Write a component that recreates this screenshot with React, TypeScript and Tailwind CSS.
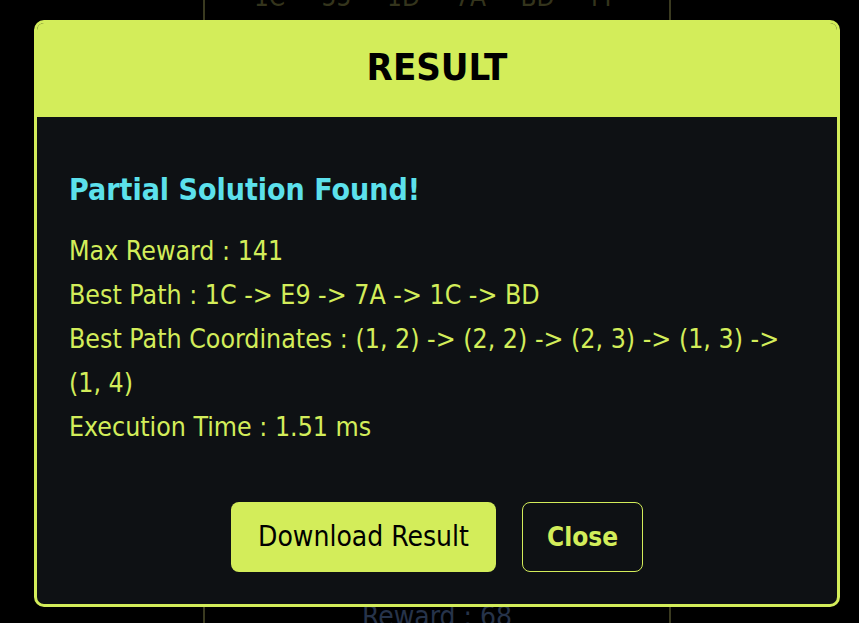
import React from "react";

const FONT = '"Liberation Sans Narrow", "DejaVu Sans Condensed", "Roboto", sans-serif';

export default function App() {
  const codes = ["1C", "55", "1D", "7A", "BD", "FF"];
  const coords = ["(1, 2)", "(2, 2)", "(2, 3)", "(1, 3)", "(1, 4)"];
  return (
    <div
      className="relative h-[623px] w-full overflow-hidden bg-black"
      style={{ fontFamily: FONT }}
    >
      {/* background page */}
      <div className="ml-[203px] flex h-[623px] w-[468px] flex-col justify-between border-x-2 border-[#3a3a20]">
        <div className="-mt-[17px] flex justify-center text-[26px] leading-[28px] text-[#34341c]">
          {codes.map((c) => (
            <span key={c} className="w-[67px] text-center">
              {c}
            </span>
          ))}
        </div>
        <div className="mb-[-14px] text-center text-[28px] leading-[40px] text-[#26334a]">
          Reward : 68
        </div>
      </div>

      {/* modal */}
      <div className="absolute left-[34px] top-[20px] flex h-[587px] w-[806px] flex-col overflow-hidden rounded-[10px] border-[3px] border-[#d3ed5a] bg-[#0e1114]">
        <div className="flex h-[94px] items-center justify-center bg-[#d3ed5a] pb-[6px]">
          <h1 className="text-[38px] font-bold leading-none text-black">RESULT</h1>
        </div>
        <div className="flex flex-1 flex-col px-[32px] pt-[51px]">
          <h2 className="text-[30px] font-bold leading-[44px] text-[#5ce1ec]">
            Partial Solution Found!
          </h2>
          <div className="mt-[17px] text-[26.5px] leading-[44px] text-[#d3ed5a]">
            <p>Max Reward : 141</p>
            <p>Best Path : 1C -&gt; E9 -&gt; 7A -&gt; 1C -&gt; BD</p>
            <p>
              Best Path Coordinates :{" "}
              {coords.map((c, i) => (
                <React.Fragment key={c}>
                  <span className="whitespace-nowrap">{c}</span>
                  {i < coords.length - 1 ? " -> " : ""}
                </React.Fragment>
              ))}
            </p>
            <p>Execution Time : 1.51 ms</p>
          </div>
          <div className="mt-[53px] flex justify-center gap-[26px]">
            <button className="h-[70px] w-[265px] rounded-[8px] bg-[#d3ed5a] text-[28px] text-black">
              Download Result
            </button>
            <button className="h-[70px] w-[121px] rounded-[8px] border border-[#d3ed5a] text-[26px] font-bold text-[#d3ed5a]">
              Close
            </button>
          </div>
        </div>
      </div>
    </div>
  );
}
